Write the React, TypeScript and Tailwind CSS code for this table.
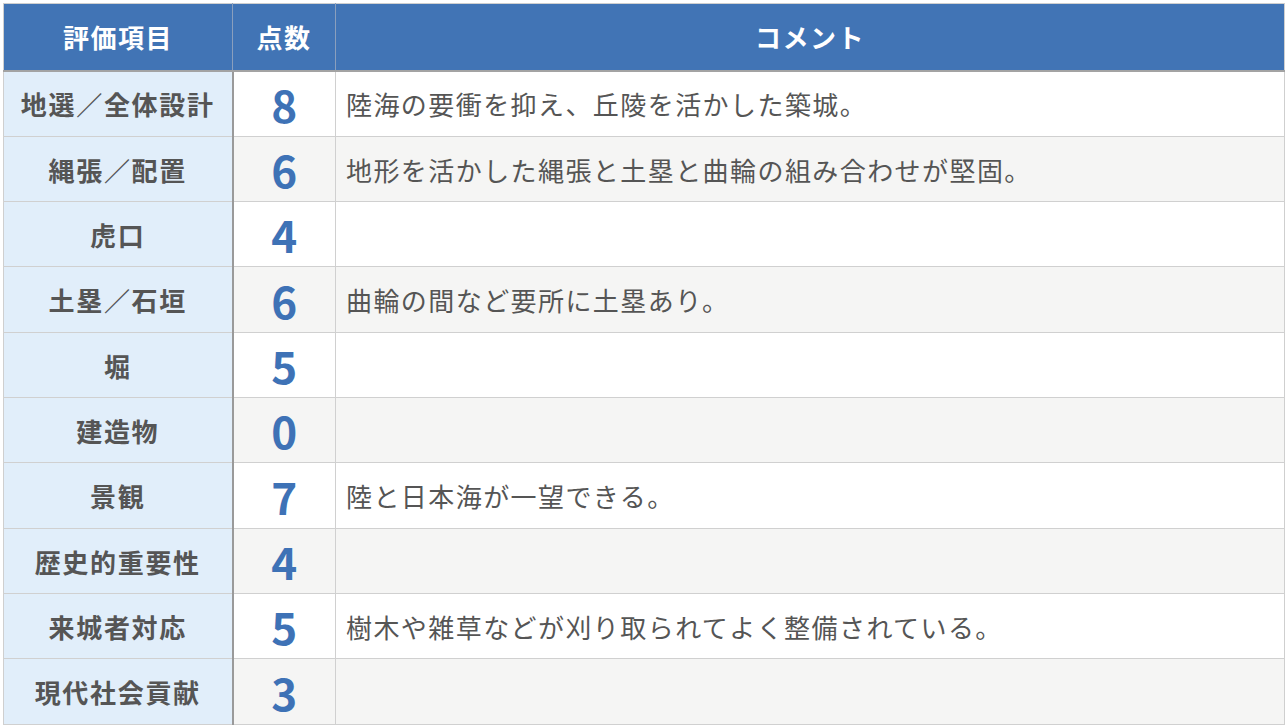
import React from 'react';

interface Row {
  item: string;
  score: number;
  comment: string;
  tall: boolean;
}

const rows: Row[] = [
  { item: '地選／全体設計', score: 8, comment: '陸海の要衝を抑え、丘陵を活かした築城。', tall: true },
  { item: '縄張／配置', score: 6, comment: '地形を活かした縄張と土塁と曲輪の組み合わせが堅固。', tall: false },
  { item: '虎口', score: 4, comment: '', tall: false },
  { item: '土塁／石垣', score: 6, comment: '曲輪の間など要所に土塁あり。', tall: true },
  { item: '堀', score: 5, comment: '', tall: false },
  { item: '建造物', score: 0, comment: '', tall: false },
  { item: '景観', score: 7, comment: '陸と日本海が一望できる。', tall: true },
  { item: '歴史的重要性', score: 4, comment: '', tall: false },
  { item: '来城者対応', score: 5, comment: '樹木や雑草などが刈り取られてよく整備されている。', tall: false },
  { item: '現代社会貢献', score: 3, comment: '', tall: true },
];

const font = "font-['Noto_Sans_CJK_JP','Noto_Sans',sans-serif]";

export default function App() {
  return (
    <div className={`w-[1288px] h-[728px] bg-white pt-[3px] pl-[3px] ${font}`}>
      <table className="w-[1282px] table-fixed border-collapse border border-[#cfcfcf]">
        <colgroup>
          <col className="w-[229px]" />
          <col className="w-[103px]" />
          <col />
        </colgroup>
        <thead>
          <tr className="h-[67px] bg-[#4174b5] text-white text-[26px] font-bold tracking-[0.06em]">
            <th className="border-r border-[#8a9fbd] border-b-2 border-b-[#a3a3a3]">評価項目</th>
            <th className="border-r border-[#8a9fbd] border-b-2 border-b-[#a3a3a3]">点数</th>
            <th className="border-b-2 border-b-[#a3a3a3]">コメント</th>
          </tr>
        </thead>
        <tbody>
          {rows.map((r, i) => (
            <tr
              key={r.item}
              className={`${r.tall ? 'h-[66px]' : 'h-[65px]'} ${i % 2 === 0 ? 'bg-white' : 'bg-[#f5f5f4]'}`}
            >
              <td className="bg-[#e1eefa] border-b border-[#d0d0d0] border-r-2 border-r-[#9a9a9a] text-center text-[26px] font-bold text-[#555555] tracking-[0.065em]">
                {r.item}
              </td>
              <td className="border-b border-r border-[#d0d0d0] text-center text-[44px] leading-none font-bold text-[#3e72b6]">
                {r.score}
              </td>
              <td className="border-b border-[#d0d0d0] pl-[10px] text-[26px] text-[#555555] tracking-[0.055em]">
                {r.comment}
              </td>
            </tr>
          ))}
        </tbody>
      </table>
    </div>
  );
}
